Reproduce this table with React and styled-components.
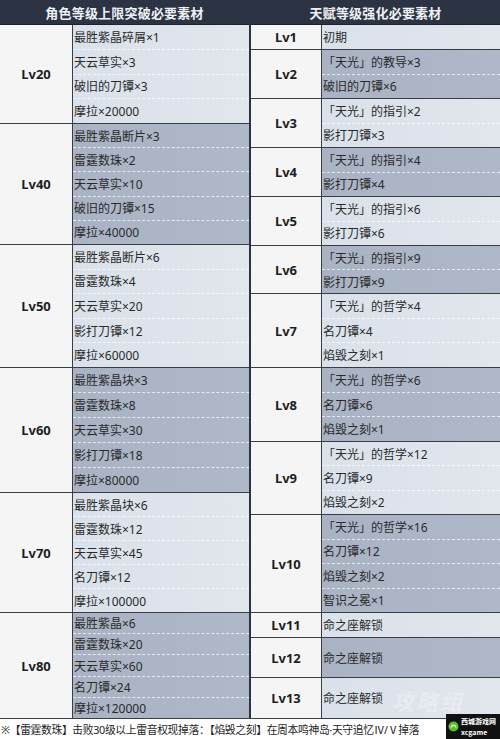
import React from "react";
import styled, { createGlobalStyle } from "styled-components";

const GlobalStyle = createGlobalStyle`
  html, body {
    margin: 0;
    padding: 0;
    background: #ffffff;
  }
  body {
    font-family: "Noto Sans", "Noto Sans CJK SC", sans-serif;
  }
`;

const Page = styled.div`
  position: relative;
  width: 500px;
  height: 739px;
  overflow: hidden;
  display: flex;
  flex-direction: column;
  background: #ffffff;
`;

const Tables = styled.div`
  display: flex;
  height: 718px;
`;

const Table = styled.div`
  display: flex;
  flex-direction: column;
  width: ${(p) => p.width}px;
  border-right: ${(p) => (p.divider ? "2px solid #2c3443" : "none")};
`;

const Header = styled.div`
  height: 25px;
  display: flex;
  align-items: center;
  justify-content: center;
  background: #2c3443;
  color: #eef0f4;
  font-family: "Noto Sans CJK SC", sans-serif;
  font-weight: bold;
  font-size: 13px;
  letter-spacing: 0.2px;
  border-bottom: 1px solid #1d222c;
  box-sizing: border-box;
`;

const Group = styled.div`
  display: flex;
  height: ${(p) => p.h}px;
  box-sizing: border-box;
  border-bottom: ${(p) => (p.last ? "none" : "1px solid #3a3d44")};
`;

const Level = styled.div`
  width: ${(p) => p.w}px;
  flex-shrink: 0;
  display: flex;
  align-items: center;
  justify-content: center;
  background: #f5f5f5;
  border-right: 1px solid #3a3d44;
  font-weight: bold;
  font-size: 13px;
  color: #1e1e1e;
`;

const Materials = styled.div`
  flex: 1;
  display: flex;
  flex-direction: column;
  background: ${(p) =>
    p.dark
      ? "linear-gradient(90deg, #a9b3c4 0%, #aeb8c8 100%)"
      : "linear-gradient(90deg, #dbe1ea 0%, #e2e6ed 100%)"};
`;

const Item = styled.div`
  flex: 1;
  display: flex;
  align-items: center;
  padding-left: 1px;
  font-size: 12px;
  color: #2a2a2a;
  white-space: nowrap;
  border-top: ${(p) => (p.first ? "none" : "1px dashed rgba(255,255,255,0.7)")};
`;

const Footer = styled.div`
  height: 21px;
  box-sizing: border-box;
  border-top: 1px solid #3a3d44;
  display: flex;
  align-items: center;
  padding: 0 55px 0 1px;
  font-size: 10.8px;
  letter-spacing: -0.35px;
  color: #1e1e1e;
  white-space: nowrap;
`;

const FooterText = styled.span`
  min-width: 0;
`;

const Watermark = styled.div`
  position: absolute;
  left: 392px;
  top: 684px;
  font-family: "Noto Sans CJK SC", sans-serif;
  font-size: 22px;
  font-weight: bold;
  font-style: italic;
  color: rgba(255, 255, 255, 0.3);
  letter-spacing: 2px;
  pointer-events: none;
`;

const Badge = styled.div`
  position: absolute;
  right: 0;
  bottom: 0;
  width: 54px;
  height: 25px;
  background: #111;
  display: flex;
  align-items: center;
  gap: 2px;
  padding-left: 2px;
  box-sizing: border-box;
  color: #fff;
`;

const BadgeText = styled.div`
  display: flex;
  flex-direction: column;
  gap: 1px;
  font-family: "Noto Sans CJK SC", sans-serif;
  font-size: 7px;
  font-weight: bold;
  line-height: 10px;
  white-space: nowrap;
`;

const leftData = [
  { lv: "Lv20", h: 99, dark: false, items: ["最胜紫晶碎屑×1", "天云草实×3", "破旧的刀镡×3", "摩拉×20000"] },
  { lv: "Lv40", h: 121, dark: true, items: ["最胜紫晶断片×3", "雷霆数珠×2", "天云草实×10", "破旧的刀镡×15", "摩拉×40000"] },
  { lv: "Lv50", h: 123, dark: false, items: ["最胜紫晶断片×6", "雷霆数珠×4", "天云草实×20", "影打刀镡×12", "摩拉×60000"] },
  { lv: "Lv60", h: 125, dark: true, items: ["最胜紫晶块×3", "雷霆数珠×8", "天云草实×30", "影打刀镡×18", "摩拉×80000"] },
  { lv: "Lv70", h: 120, dark: false, items: ["最胜紫晶块×6", "雷霆数珠×12", "天云草实×45", "名刀镡×12", "摩拉×100000"] },
  { lv: "Lv80", h: 105, dark: true, items: ["最胜紫晶×6", "雷霆数珠×20", "天云草实×60", "名刀镡×24", "摩拉×120000"] },
];

const rightData = [
  { lv: "Lv1", h: 25, items: ["初期"] },
  { lv: "Lv2", h: 49, items: ["「天光」的教导×3", "破旧的刀镡×6"] },
  { lv: "Lv3", h: 49, items: ["「天光」的指引×2", "影打刀镡×3"] },
  { lv: "Lv4", h: 49, items: ["「天光」的指引×4", "影打刀镡×4"] },
  { lv: "Lv5", h: 49, items: ["「天光」的指引×6", "影打刀镡×6"] },
  { lv: "Lv6", h: 48, items: ["「天光」的指引×9", "影打刀镡×9"] },
  { lv: "Lv7", h: 74, items: ["「天光」的哲学×4", "名刀镡×4", "焰毁之刻×1"] },
  { lv: "Lv8", h: 74, items: ["「天光」的哲学×6", "名刀镡×6", "焰毁之刻×1"] },
  { lv: "Lv9", h: 73, items: ["「天光」的哲学×12", "名刀镡×9", "焰毁之刻×2"] },
  { lv: "Lv10", h: 98, items: ["「天光」的哲学×16", "名刀镡×12", "焰毁之刻×2", "智识之冕×1"] },
  { lv: "Lv11", h: 25, items: ["命之座解锁"] },
  { lv: "Lv12", h: 40, items: ["命之座解锁"] },
  { lv: "Lv13", h: 40, items: ["命之座解锁"] },
];

const LevelTable = ({ title, rows, width, levelWidth, divider }) => (
  <Table width={width} divider={divider}>
    <Header>{title}</Header>
    {rows.map((row, i) => (
      <Group key={row.lv} h={row.h} last={i === rows.length - 1}>
        <Level w={levelWidth}>{row.lv}</Level>
        <Materials dark={row.dark ?? i % 2 === 1}>
          {row.items.map((item, j) => (
            <Item key={j} first={j === 0}>{item}</Item>
          ))}
        </Materials>
      </Group>
    ))}
  </Table>
);

const App = () => (
  <>
    <GlobalStyle />
    <Page>
      <Tables>
        <LevelTable title="角色等级上限突破必要素材" rows={leftData} width={250} levelWidth={72} divider />
        <LevelTable title="天赋等级强化必要素材" rows={rightData} width={250} levelWidth={70} />
      </Tables>
      <Footer>
        <FooterText>※【雷霆数珠】击败30级以上雷音权现掉落：【焰毁之刻】在周本鸣神岛·天守追忆Ⅳ/Ⅴ掉落</FooterText>
      </Footer>
      <Watermark>攻略组</Watermark>
      <Badge>
        <svg width="11" height="11" viewBox="0 0 12 12">
          <circle cx="6" cy="6" r="5.5" fill="#5fbf2a" />
          <path d="M3 7 Q6 2 9 7" stroke="#fff" strokeWidth="1.2" fill="none" />
        </svg>
        <BadgeText>
          <span>西城游戏网</span>
          <span>xcgame</span>
        </BadgeText>
      </Badge>
    </Page>
  </>
);

export default App;
